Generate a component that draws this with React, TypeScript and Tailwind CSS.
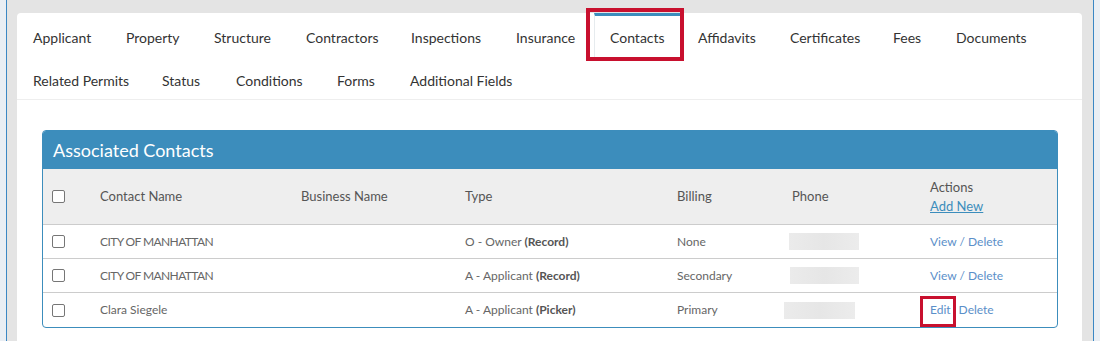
import React from "react";

const row1 = [
  { label: "Applicant", w: 93 },
  { label: "Property", w: 88 },
  { label: "Structure", w: 92 },
  { label: "Contractors", w: 105 },
  { label: "Inspections", w: 105 },
  { label: "Insurance", w: 94 },
  { label: "Contacts", w: 88, active: true },
  { label: "Affidavits", w: 92 },
  { label: "Certificates", w: 103 },
  { label: "Fees", w: 63 },
  { label: "Documents", w: 100 },
];
const row2 = [
  { label: "Related Permits", w: 129 },
  { label: "Status", w: 74 },
  { label: "Conditions", w: 101 },
  { label: "Forms", w: 73 },
  { label: "Additional Fields", w: 120 },
];

const rows = [
  { name: "CITY OF MANHATTAN", type: "O - Owner", tag: "(Record)", billing: "None", phoneOff: 9, phoneW: 70, edit: false },
  { name: "CITY OF MANHATTAN", type: "A - Applicant", tag: "(Record)", billing: "Secondary", phoneOff: 10, phoneW: 69, edit: false },
  { name: "Clara Siegele", type: "A - Applicant", tag: "(Picker)", billing: "Primary", phoneOff: 4, phoneW: 71, edit: true },
];

function Checkbox() {
  return <div className="w-[13px] h-[13px] rounded-[2px] border border-[#767676] bg-white" />;
}

function Tab({ label, w, active }: { label: string; w: number; active?: boolean }) {
  return (
    <div
      className={
        "relative flex items-center text-[14px] text-[#333] " +
        (active ? "pl-[15px] border-t-[3px] border-t-[#3c8dbc] border-x border-x-[#e6ebee]" : "pl-[16px] pt-[3px]")
      }
      style={{ width: w }}
    >
      {label}
      {active && (
        <div className="absolute left-[-9px] right-[-3px] top-[-8px] bottom-[-3px] border-[4px] border-[#c8102e]" />
      )}
    </div>
  );
}

export default function App() {
  const grid = "grid grid-cols-[45px_201px_164px_212px_115px_138px_1fr]";
  return (
    <div className="flex w-[1100px] h-[341px] overflow-hidden" style={{ fontFamily: "Lato, 'Open Sans', sans-serif" }}>
      <div className="w-[6px] bg-[#e9eef4]" />
      <div className="w-px bg-[#3a87c4]" />
      <div className="flex-1 bg-[#e4e4e4] pl-[10px] pr-[11px] pt-[13px]">
        <div className="bg-white rounded-t-[4px] h-full">
          <div className="flex h-[45px]">
            {row1.map((t) => (
              <Tab key={t.label} {...t} />
            ))}
          </div>
          <div className="flex h-[42px] border-b border-[#eeeeee]">
            {row2.map((t) => (
              <Tab key={t.label} {...t} />
            ))}
          </div>
          <div className="pl-[25px] pr-[24px] pt-[30px]">
            <div className="border border-[#3c8dbc] rounded-[4px] overflow-visible">
              <div className="h-[38px] bg-[#3c8dbc] flex items-center pl-[10px] text-white text-[18px] rounded-t-[3px]">
                Associated Contacts
              </div>
              <div className={grid + " h-[56px] bg-[#eeeeee] border-b border-[#cccccc] items-center text-[13px] text-[#555]"}>
                <div className="pl-[9px]"><Checkbox /></div>
                <div className="pl-[12px]">Contact Name</div>
                <div className="pl-[12px]">Business Name</div>
                <div className="pl-[12px]">Type</div>
                <div className="pl-[12px]">Billing</div>
                <div className="pl-[12px]">Phone</div>
                <div className="pl-[12px] flex flex-col leading-[19px] pt-[1px]">
                  <span>Actions</span>
                  <span className="text-[#3c8dbc] underline">Add New</span>
                </div>
              </div>
              {rows.map((r, i) => (
                <div
                  key={i}
                  className={grid + " h-[34px] items-center text-[12px] text-[#666] " + (i < rows.length - 1 ? "border-b border-[#cccccc]" : "")}
                >
                  <div className="pl-[9px]"><Checkbox /></div>
                  <div className={"pl-[12px] " + (r.edit ? "" : "tracking-[-0.6px]")}>{r.name}</div>
                  <div />
                  <div className="pl-[12px]">
                    {r.type} <span className="font-bold text-[#555]">{r.tag}</span>
                  </div>
                  <div className="pl-[12px]">{r.billing}</div>
                  <div>
                    <div
                      className="h-[17px] bg-gradient-to-r from-[#ebebeb] via-[#e6e6e6] to-[#ececec]"
                      style={{ marginLeft: r.phoneOff, width: r.phoneW }}
                    />
                  </div>
                  <div className="pl-[12px] text-[#5b8fc9]">
                    {r.edit ? (
                      <span className="flex items-center">
                        <span className="relative">
                          Edit
                          <span className="absolute left-[-10px] right-[-5px] top-[-5px] bottom-[-8px] border-[3px] border-[#c8102e]" />
                        </span>
                        <span className="ml-[8px]">Delete</span>
                      </span>
                    ) : (
                      "View / Delete"
                    )}
                  </div>
                </div>
              ))}
            </div>
          </div>
        </div>
      </div>
      <div className="w-px bg-[#3a87c4]" />
      <div className="w-[6px] bg-[#e9eef4]" />
    </div>
  );
}
